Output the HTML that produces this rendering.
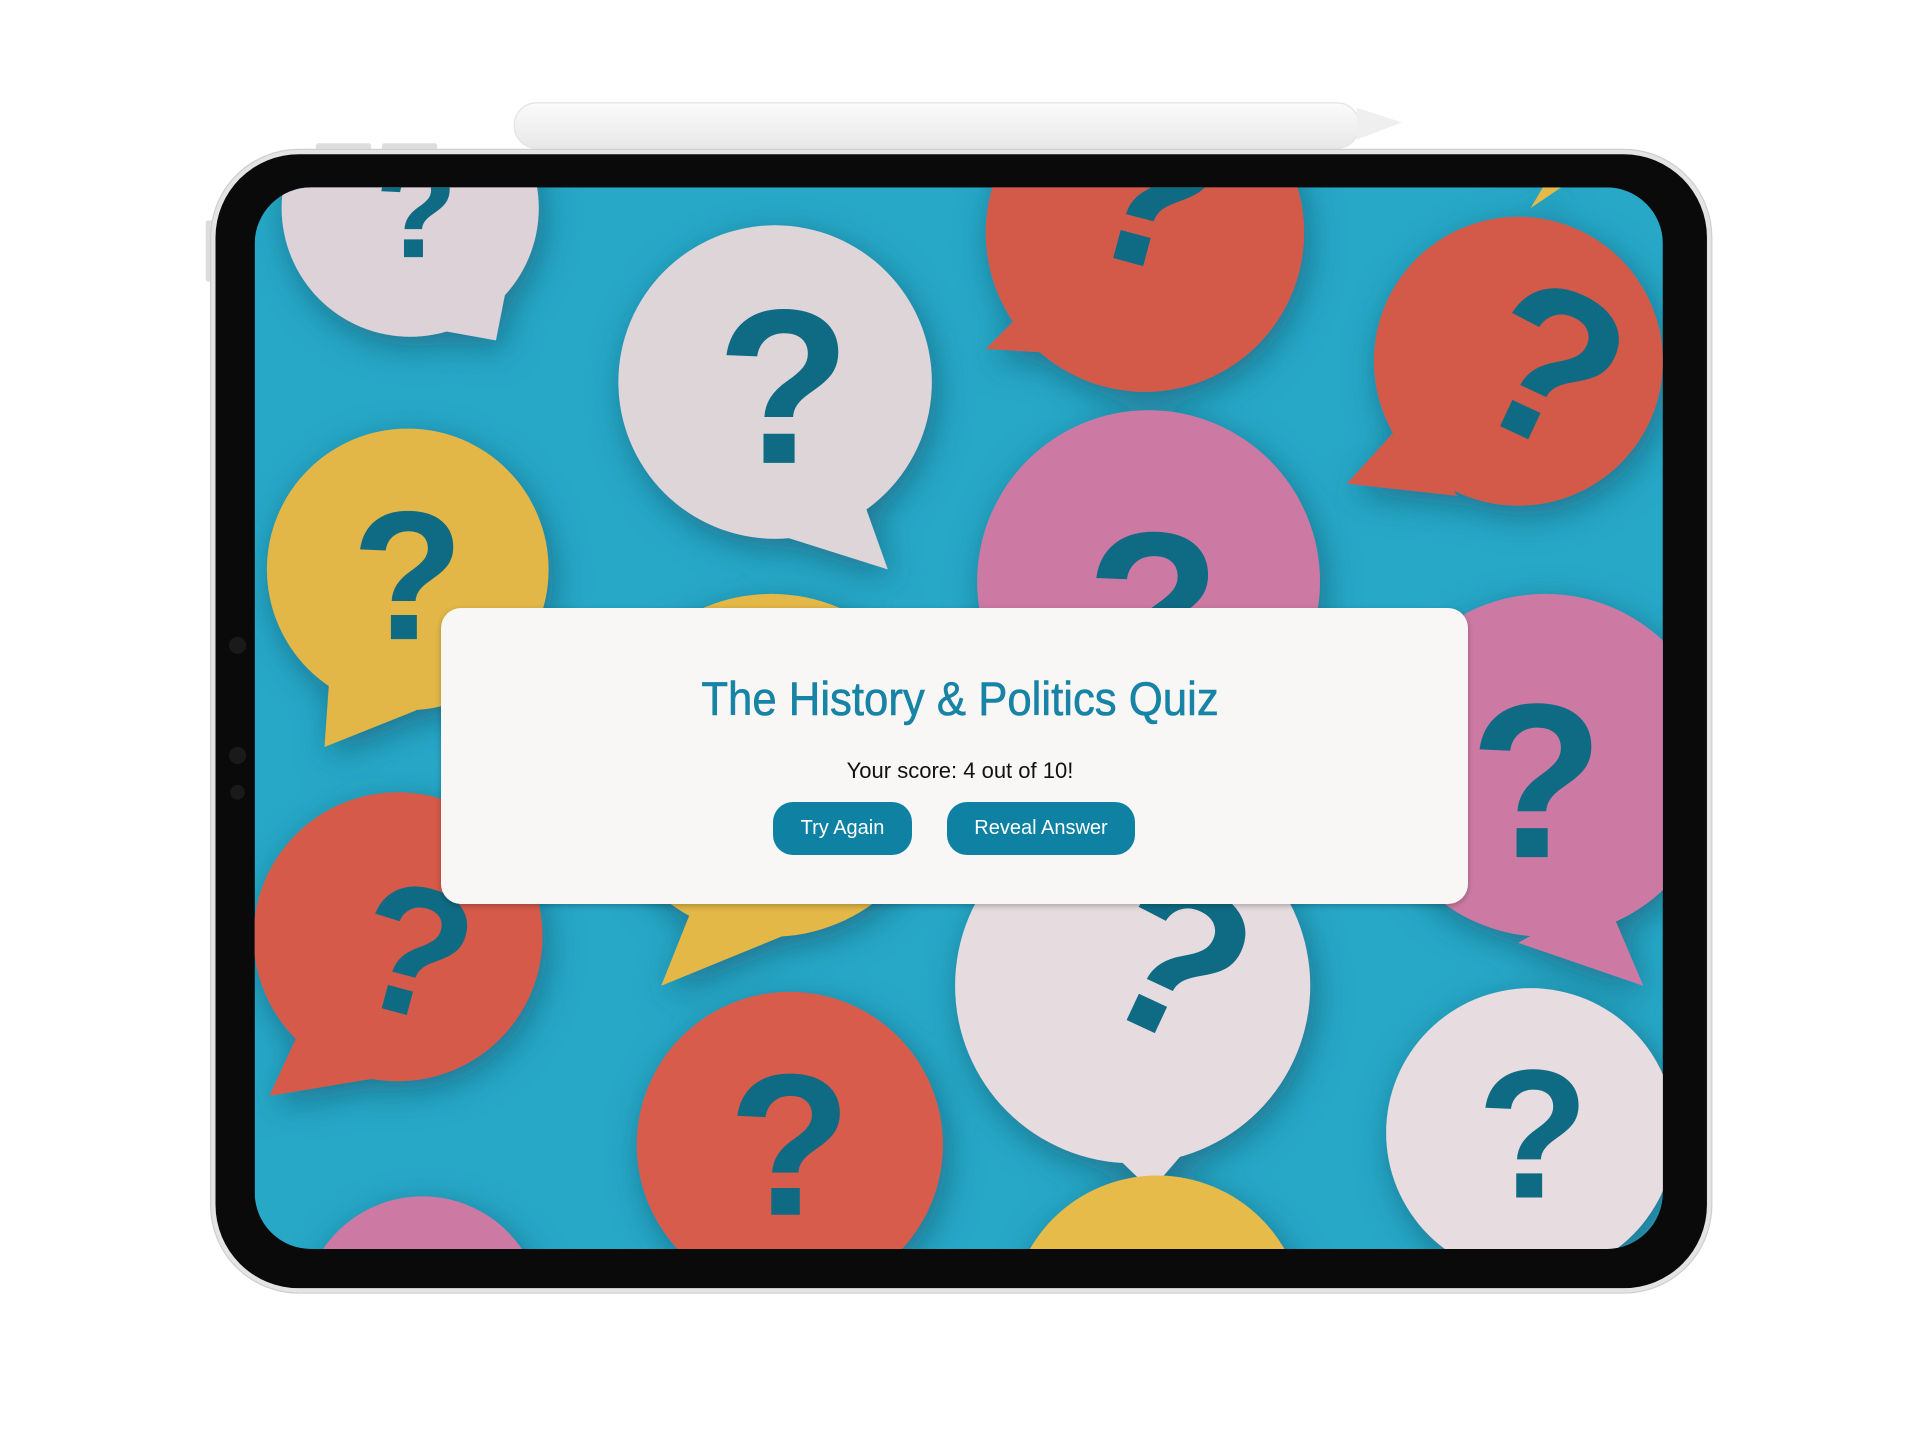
<!DOCTYPE html>
<html><head><meta charset="utf-8"><style>
html,body{margin:0;padding:0;background:#fff;width:1920px;height:1440px;overflow:hidden;font-family:"Liberation Sans",sans-serif}
svg{position:absolute;left:0;top:0}
.card{position:absolute;left:441px;top:608px;width:1027px;height:296px;background:#f8f7f5;border-radius:20px;box-shadow:0 2px 6px rgba(0,0,0,.25);text-align:center}
.t{position:absolute;left:0;right:0;top:671px;text-align:center;color:#1784a6;font-size:47px;transform:scaleX(.93);white-space:nowrap;-webkit-text-stroke:0.6px #1784a6}
.s{position:absolute;left:0;right:0;top:758px;text-align:center;font-size:22px;color:#111}
.b{position:absolute;top:802px;height:53px;background:#0f82a3;border-radius:20px;color:#fff;font-size:20px;line-height:53px;text-align:center}
</style></head><body>
<svg width="1920" height="1440" viewBox="0 0 1568 1176">
<defs>
<clipPath id="sc"><rect x="208" y="153" width="1150" height="867" rx="46"/></clipPath>
<filter id="sh" x="-30%" y="-30%" width="160%" height="160%"><feDropShadow dx="4" dy="8" stdDeviation="14" flood-color="#0a4a60" flood-opacity=".55"/></filter>
<linearGradient id="pg" x1="0" y1="0" x2="0" y2="1"><stop offset="0" stop-color="#fbfbfb"/><stop offset="1" stop-color="#e8e8e8"/></linearGradient>
</defs>
<rect x="258" y="117" width="45" height="6" rx="2" fill="#ddd"/>
<rect x="312" y="117" width="45" height="6" rx="2" fill="#ddd"/>
<rect x="168" y="180" width="6" height="50" rx="2" fill="#ddd"/>
<rect x="420" y="84" width="690" height="37" rx="18" fill="url(#pg)" stroke="#e4e4e4"/>
<path d="M1108 88 L1145 100 L1108 114 Z" fill="#efefef"/>
<rect x="172" y="122" width="1226" height="934" rx="72" fill="#e4e4e4" stroke="#cfcfcf"/>
<rect x="176" y="126" width="1218" height="926" rx="68" fill="#0a0a0a"/>
<circle cx="194" cy="527" r="7" fill="#1a1a1a"/><circle cx="194" cy="617" r="7" fill="#1a1a1a"/><circle cx="194" cy="647" r="6" fill="#1a1a1a"/>
<g clip-path="url(#sc)">
<rect x="208" y="153" width="1150" height="867" fill="#27a8c7"/>
<g filter="url(#sh)">
<g fill="#dcd2d7"><circle cx="335" cy="170" r="105"/><polygon points="419,207 405,278 333,265"/></g>
<g fill="#ded5d9"><circle cx="633" cy="312" r="128"/><polygon points="700,395 725,465 630,435"/></g>
<g fill="#d35a4a"><circle cx="935" cy="190" r="130"/><polygon points="860,230 805,285 890,290"/></g>
<polygon points="1250,170 1275,153 1260,153" fill="#e4b94a"/>
<g fill="#d35a4a"><circle cx="1240" cy="295" r="118"/><polygon points="1150,340 1100,395 1190,405"/></g>
<g fill="#e2b747"><circle cx="333" cy="465" r="115"/><polygon points="270,540 265,610 340,580"/></g>
<g fill="#cc7aa3"><circle cx="938" cy="475" r="140"/></g>
<g fill="#e3b847"><circle cx="630" cy="625" r="140"/><polygon points="570,730 540,805 650,760"/></g>
<g fill="#cc7aa3"><circle cx="1262" cy="625" r="140"/><polygon points="1310,730 1342,805 1240,770"/></g>
<g fill="#d65a4a"><circle cx="325" cy="765" r="118"/><polygon points="250,830 220,895 310,880"/></g>
<g fill="#e6dcdf"><circle cx="925" cy="805" r="145"/><polygon points="855,890 940,972 985,920"/></g>
<g fill="#d85c4b"><circle cx="645" cy="935" r="125"/></g>
<g fill="#e7dcdf"><circle cx="1250" cy="925" r="118"/><polygon points="1290,980 1300,1025 1240,1030"/></g>
<g fill="#e6bb48"><circle cx="945" cy="1080" r="120"/></g>
<g fill="#cc7aa3"><circle cx="345" cy="1075" r="98"/></g>
</g>
<g fill="#0f6b84" font-family="Liberation Sans,sans-serif" font-weight="bold" font-size="180" text-anchor="middle">
<text x="340" y="210" font-size="110">?</text>
<text x="640" y="378">?</text>
<text x="925" y="215" transform="rotate(15 925 215)">?</text>
<text x="1240" y="355" transform="rotate(25 1240 355)">?</text>
<text x="333" y="522" font-size="150">?</text>
<text x="942" y="560">?</text>
<text x="1255" y="700">?</text>
<text x="325" y="827" font-size="150" transform="rotate(15 325 827)">?</text>
<text x="935" y="840" transform="rotate(25 935 840)">?</text>
<text x="645" y="992" font-size="165">?</text>
<text x="1252" y="978" font-size="150">?</text>
</g>
</g>
</svg>
<div class="card"></div>
<div class="t">The History &amp; Politics Quiz</div>
<div class="s">Your score: 4 out of 10!</div>
<div class="b" style="left:773px;width:139px">Try Again</div>
<div class="b" style="left:947px;width:188px">Reveal Answer</div>
</body></html>
